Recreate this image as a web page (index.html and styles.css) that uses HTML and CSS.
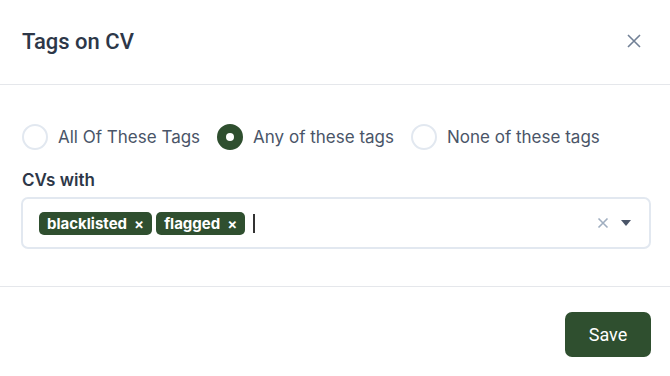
FILE: index.html
```html
<!DOCTYPE html>
<html lang="en">
<head>
  <meta charset="utf-8" />
  <title>Tags on CV</title>
  <link rel="stylesheet" href="styles.css">
</head>
<body>
  <div class="modal">
    <header class="modal-header">
      <h2>Tags on CV</h2>
      <button class="close" aria-label="Close">
        <svg width="14" height="14" viewBox="0 0 14 14"><path d="M1 1L13 13M13 1L1 13" stroke="#718096" stroke-width="1.6" fill="none"/></svg>
      </button>
    </header>

    <section class="modal-body">
      <div class="radio-group">
        <label class="radio"><span class="dot"></span>All Of These Tags</label>
        <label class="radio checked"><span class="dot"></span>Any of these tags</label>
        <label class="radio"><span class="dot"></span>None of these tags</label>
      </div>

      <div class="field-label">CVs with</div>
      <div class="select">
        <div class="values">
          <span class="chip">blacklisted <span class="x">×</span></span>
          <span class="chip">flagged <span class="x">×</span></span>
          <span class="caret"></span>
        </div>
        <div class="indicators">
          <svg width="12" height="12" viewBox="0 0 12 12"><path d="M1.5 1.5L10.5 10.5M10.5 1.5L1.5 10.5" stroke="#a0aec0" stroke-width="1.6" fill="none"/></svg>
          <svg width="10" height="6" viewBox="0 0 10 6"><path d="M0 0H10L5 6Z" fill="#4a5568"/></svg>
        </div>
      </div>
    </section>

    <footer class="modal-footer">
      <button class="save">Save</button>
    </footer>
  </div>
</body>
</html>
```

FILE: styles.css
```css
html,
body {
  margin: 0;
  padding: 0;
  background: #fff;
  font-family: Inter, 'Noto Sans', sans-serif;
}

.modal {
  width: 670px;
  height: 376px;
  display: flex;
  flex-direction: column;
}

.modal-header {
  height: 85px;
  box-sizing: border-box;
  padding: 0 29px 0 22px;
  display: flex;
  align-items: center;
  justify-content: space-between;
  border-bottom: 1px solid #e5e7eb;
}

h2 {
  margin: 0 0 1px 0;
  font-family: Roboto, sans-serif;
  font-weight: 500;
  font-size: 22px;
  color: #2d3748;
}

.close {
  border: 0;
  background: none;
  padding: 0;
  display: flex;
  margin-bottom: 2px;
}

.modal-body {
  padding: 39px 19px 37px 21px;
  border-bottom: 1px solid #e5e7eb;
}

.radio-group {
  display: flex;
  align-items: center;
  gap: 17px;
  padding-left: 1px;
}

.radio {
  display: flex;
  align-items: center;
  gap: 10px;
  font-size: 17px;
  color: #4a5568;
}

.dot {
  width: 26px;
  height: 26px;
  box-sizing: border-box;
  border: 2px solid #e2e8f0;
  border-radius: 50%;
  display: flex;
  align-items: center;
  justify-content: center;
}

.radio.checked .dot {
  background: #2f4f2f;
  border-color: #2f4f2f;
}

.radio.checked .dot::after {
  content: "";
  width: 8px;
  height: 8px;
  border-radius: 50%;
  background: #fff;
}

.field-label {
  margin-top: 20px;
  padding-left: 1px;
  font-size: 17px;
  font-weight: 600;
  color: #2d3748;
}

.select {
  margin-top: 7px;
  height: 52px;
  box-sizing: border-box;
  border: 2px solid #e2e8f0;
  border-radius: 7px;
  display: flex;
  align-items: center;
  justify-content: space-between;
  padding: 0 18px 0 16px;
}

.values {
  display: flex;
  align-items: center;
  gap: 4px;
}

.chip {
  height: 23px;
  box-sizing: border-box;
  padding: 0 8px;
  border-radius: 5px;
  background: #2f4f2f;
  color: #fff;
  font-size: 15px;
  font-weight: 700;
  display: flex;
  align-items: center;
  gap: 7px;
}

.chip .x {
  font-weight: 600;
  font-size: 15px;
}

.caret {
  width: 1.5px;
  height: 19px;
  background: #333;
  margin-left: 4px;
}

.indicators {
  display: flex;
  align-items: center;
  gap: 12px;
}

.modal-footer {
  flex: 1;
  display: flex;
  justify-content: flex-end;
  padding: 25px 19px 0 0;
}

.save {
  width: 86px;
  height: 45px;
  border: 0;
  border-radius: 7px;
  background: #2f4f2f;
  color: #fff;
  font-family: Roboto, sans-serif;
  font-size: 18px;
}
```
